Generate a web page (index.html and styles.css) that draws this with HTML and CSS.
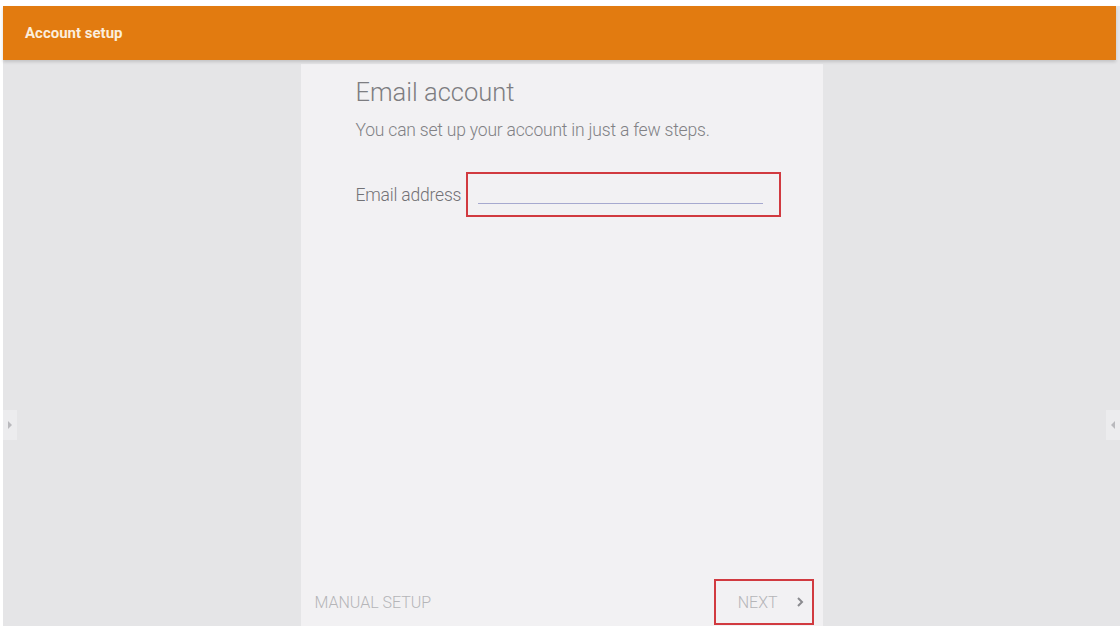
FILE: index.html
```html
<!DOCTYPE html>
<html lang="en">
<head>
    <meta charset="UTF-8">
    <title>Account setup</title>
    <link rel="stylesheet" href="styles.css">
</head>
<body>
    <div class="screen">
        <div class="app-bar">
            <span class="app-title">Account setup</span>
        </div>

        <div class="content">
            <div class="side-tab side-left">
                <svg width="6" height="8" viewBox="0 0 6 8"><path d="M1 0 L5 4 L1 8 Z" fill="#b9b9bd"/></svg>
            </div>

            <div class="card">
                <div class="card-body">
                    <h1 class="card-title">Email account</h1>
                    <p class="card-subtitle">You can set up your account in just a few steps.</p>

                    <div class="field-row">
                        <label class="field-label" for="email">Email address</label>
                        <div class="field-box">
                            <input id="email" class="field-input" type="email">
                        </div>
                    </div>
                </div>

                <div class="card-footer">
                    <button class="btn-flat">MANUAL SETUP</button>
                    <div class="next-box">
                        <button class="btn-flat btn-next">
                            NEXT
                            <svg width="8" height="10" viewBox="0 0 8 10"><path d="M2 1 L6 5 L2 9" fill="none" stroke="#8b8b8f" stroke-width="2"/></svg>
                        </button>
                    </div>
                </div>
            </div>

            <div class="side-tab side-right">
                <svg width="6" height="8" viewBox="0 0 6 8"><path d="M5 0 L1 4 L5 8 Z" fill="#b9b9bd"/></svg>
            </div>
        </div>
    </div>
</body>
</html>
```

FILE: styles.css
```css
* {
    margin: 0;
    padding: 0;
    box-sizing: border-box;
}

body {
    font-family: Roboto, 'Liberation Sans', Arial, sans-serif;
    background: #ffffff;
    width: 1120px;
    height: 626px;
    overflow: hidden;
}

.screen {
    margin: 6px 0 0 3px;
    height: 620px;
    display: flex;
    flex-direction: column;
    background: #e5e5e7;
}

.app-bar {
    height: 54px;
    background: #e27b10;
    display: flex;
    align-items: center;
    padding-left: 22px;
    margin-right: 4px;
    box-shadow: 0 2px 3px rgba(0,0,0,0.15);
    position: relative;
    z-index: 1;
}

.app-title {
    color: #fbeedd;
    font-size: 15px;
    font-weight: bold;
}

.content {
    flex: 1;
    display: flex;
    justify-content: space-between;
    align-items: stretch;
}

.side-tab {
    align-self: flex-start;
    margin-top: 350px;
    width: 14px;
    height: 30px;
    display: flex;
    align-items: center;
    justify-content: center;
    background: #ececee;
}

.card {
    width: 522px;
    background: #f2f1f3;
    display: flex;
    flex-direction: column;
    justify-content: space-between;
    margin-top: 4px;
}

.card-body {
    padding: 13px 0 0 55px;
}

.card-title {
    font-size: 25.5px;
    font-weight: 300;
    color: #7d7d81;
    margin-bottom: 13px;
}

.card-subtitle {
    font-size: 17.5px;
    font-weight: 300;
    color: #818185;
    letter-spacing: -0.2px;
    margin-bottom: 32px;
}

.field-row {
    display: flex;
    align-items: center;
}

.field-label {
    font-size: 17.5px;
    font-weight: 300;
    color: #727276;
    letter-spacing: -0.2px;
    margin-right: 5px;
}

.field-box {
    width: 315px;
    height: 45px;
    border: 2px solid #d13a40;
    padding: 0 16px 0 10px;
    display: flex;
    align-items: flex-end;
}

.field-input {
    width: 100%;
    height: 28px;
    margin-bottom: 11px;
    border: none;
    border-bottom: 1.5px solid #a6a9cf;
    background: transparent;
    outline: none;
}

.card-footer {
    display: flex;
    justify-content: space-between;
    align-items: center;
    padding: 0 9px 1px 14px;
}

.btn-flat {
    border: none;
    background: transparent;
    font-family: Roboto, 'Liberation Sans', Arial, sans-serif;
    font-size: 16px;
    font-weight: 300;
    color: #b5b5b8;
}

.next-box {
    width: 100px;
    height: 46px;
    border: 2px solid #d13a40;
    display: flex;
    align-items: center;
    justify-content: flex-end;
    padding-right: 8px;
}

.btn-next {
    display: flex;
    align-items: center;
    gap: 18px;
}
```
